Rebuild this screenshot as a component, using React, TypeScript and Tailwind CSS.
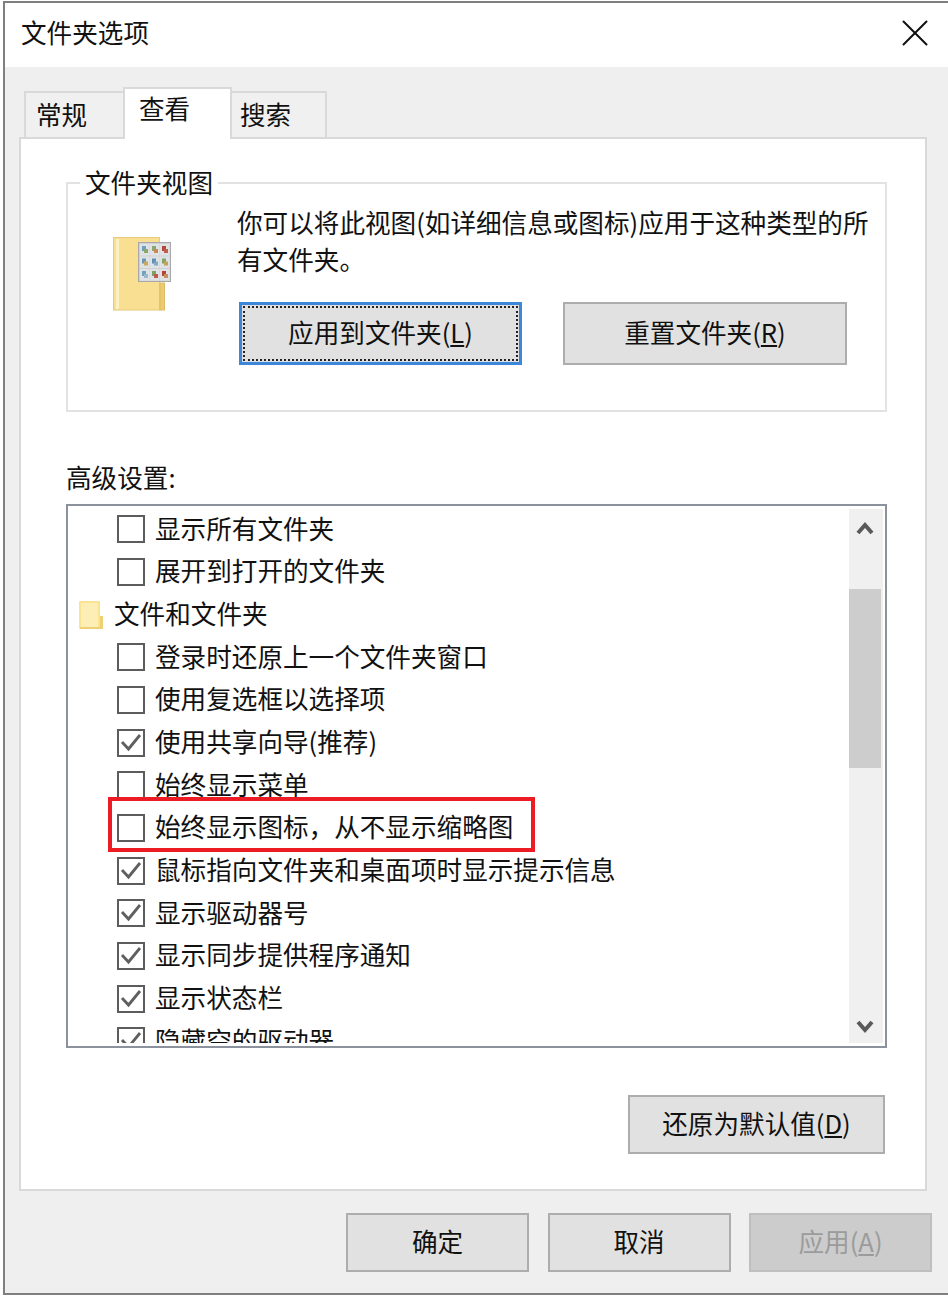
import React from 'react';
import { X } from 'lucide-react';

type Row = { label: string; checked?: boolean; folder?: boolean };

const rows: Row[] = [
  { label: '显示所有文件夹' },
  { label: '展开到打开的文件夹' },
  { label: '文件和文件夹', folder: true },
  { label: '登录时还原上一个文件夹窗口' },
  { label: '使用复选框以选择项' },
  { label: '使用共享向导(推荐)', checked: true },
  { label: '始终显示菜单' },
  { label: '始终显示图标，从不显示缩略图' },
  { label: '鼠标指向文件夹和桌面项时显示提示信息', checked: true },
  { label: '显示驱动器号', checked: true },
  { label: '显示同步提供程序通知', checked: true },
  { label: '显示状态栏', checked: true },
  { label: '隐藏空的驱动器', checked: true },
];

const Checkbox: React.FC<{ checked?: boolean }> = ({ checked }) => (
  <span className="w-[28px] h-[28px] shrink-0 border-2 border-[#5c5c5c] bg-white flex items-center justify-center">
    {checked && (
      <svg width="24" height="24" viewBox="0 0 24 24" fill="none">
        <path d="M3 11 L9.5 18 L21 4" stroke="#5f5f5f" strokeWidth="2.8" />
      </svg>
    )}
  </span>
);

const SmallFolder = () => (
  <svg width="24" height="28" viewBox="0 0 24 28" className="shrink-0">
    <path d="M0 1 Q0 0 1 0 H21 V15 H24 V28 H1 Q0 28 0 27 Z" fill="#fbe394" />
    <path d="M2 2 H19 V26 H2 Z" fill="#fdeeb6" />
    <path d="M21 15 H24 V28 H1 V26 H21 Z" fill="#efcf73" />
  </svg>
);

const FolderViewIcon = () => {
  const cells = [
    ['#6f9fbf', '#8aa86a'],
    ['#8aa86a', '#c98a5a'],
    ['#b8453c', '#c0604c'],
    ['#6a98b8', '#c8a85a'],
    ['#5f90b4', '#7ea8c4'],
    ['#82a468', '#c0a45a'],
    ['#74a0c0', '#98b8cc'],
    ['#7ca268', '#c05a4c'],
    ['#b8423a', '#c8905a'],
  ];
  return (
    <svg width="59" height="74" viewBox="0 0 59 74" className="shrink-0">
      <rect x="0.5" y="0.5" width="46" height="72.5" fill="#f8df92" stroke="#e6cb7d" />
      <rect x="3" y="2" width="3" height="70" fill="#fdf0c4" />
      <rect x="47" y="46" width="4.5" height="27" fill="#eccb6f" stroke="#dcbc66" strokeWidth="1" />
      <rect x="25.5" y="5.5" width="32" height="39" fill="#d0d0d0" stroke="#a9a9a9" />
      {cells.map((colors, i) => {
        const x = 27 + (i % 3) * 10;
        const y = 7 + Math.floor(i / 3) * 12.5;
        return (
          <g key={i}>
            <rect x={x} y={y} width="9.5" height="11.5" fill="#dfe3e6" />
            <rect x={x + 2} y={y + 2} width="4" height="5" fill={colors[0]} />
            <rect x={x + 4} y={y + 5} width="4" height="4" fill={colors[1]} />
          </g>
        );
      })}
    </svg>
  );
};

const Tab: React.FC<{ label: string; active?: boolean; className: string }> = ({ label, active, className }) => (
  <div
    className={
      active
        ? `${className} h-[52px] -mb-[2px] z-10 bg-white border-2 border-b-0 border-[#d9d9d9] pb-[13px] flex items-center`
        : `${className} h-[46px] bg-[#f0f0f0] border-t-2 border-[#d9d9d9] pb-[4px] flex items-center`
    }
  >
    {label}
  </div>
);

const ActionButton: React.FC<{ className: string; disabled?: boolean; children: React.ReactNode }> = ({
  className,
  disabled,
  children,
}) => (
  <button
    className={
      disabled
        ? `${className} border-2 border-[#bfbfbf] bg-[#cccccc] text-[#9b9b9b] flex items-center justify-center`
        : `${className} border-2 border-[#adadad] bg-[#e1e1e1] text-[#111111] flex items-center justify-center`
    }
  >
    <span className="pb-[4px]">{children}</span>
  </button>
);

export default function App() {
  return (
    <div className="w-[948px] h-[1296px] bg-white pt-[1px] pl-[3px] overflow-hidden font-['Noto_Sans_CJK_SC',sans-serif] text-[25.6px] leading-[37px] text-[#111111]">
      <div className="h-[1294px] border-2 border-r-0 border-[#7f7f7f] flex flex-col">
        {/* Title bar */}
        <div className="h-[64px] shrink-0 bg-white flex items-center justify-between pl-[16px] pr-[10px] pb-[4px]">
          <span className="pb-[4px]">文件夹选项</span>
          <X size={46} strokeWidth={1.05} className="text-[#111111]" />
        </div>

        <div className="flex-1 bg-[#efefef] pl-[14px] pr-[21px]">
          {/* Tabs */}
          <div className="flex items-end pt-[20px] pl-[5px]">
            <Tab label="常规" className="w-[99px] pl-[10px] border-l-2" />
            <Tab label="查看" active className="w-[109px] pl-[14px]" />
            <Tab label="搜索" className="w-[95px] pl-[8px] border-r-2" />
          </div>

          {/* Tab panel */}
          <div className="h-[1054px] bg-white border-2 border-[#d9d9d9] pl-[45px] pr-[38px]">
            <fieldset className="h-[249px] mt-[24px] border-2 border-[#e2e2e2]">
              <legend className="ml-[12px] px-[5px] pb-[2px]">文件夹视图</legend>
              <div className="flex pt-[1px] pl-[45px]">
                <div className="w-[124px] pt-[34px]">
                  <FolderViewIcon />
                </div>
                <div>
                  <p className="w-[640px]">
                    你可以将此视图(如详细信息或图标)应用于这种类型的所
                    <br />
                    有文件夹。
                  </p>
                  <div className="flex gap-[41px] mt-[25px] ml-[2px]">
                    <button className="relative w-[283px] h-[63px] border-[3px] border-[#3c87d8] bg-[#e1e1e1] flex items-center justify-center">
                      <span className="absolute inset-[1px] border-2 border-dotted border-[#222222]" />
                      <span className="pb-[4px]">
                        应用到文件夹(<u>L</u>)
                      </span>
                    </button>
                    <ActionButton className="w-[284px] h-[63px]">
                      重置文件夹(<u>R</u>)
                    </ActionButton>
                  </div>
                </div>
              </div>
            </fieldset>

            <div className="mt-[46px] mb-[9px]">高级设置:</div>

            {/* Settings list */}
            <div className="relative h-[544px] border-2 border-[#8b929e] bg-white flex py-[3px] pr-[2px]">
              <div className="flex-1 overflow-hidden">
                <div className="-mt-[1px]">
                  {rows.map((row) => (
                    <div
                      key={row.label}
                      className={
                        row.folder
                          ? 'h-[42.67px] flex items-center pl-[11px] gap-[11px] whitespace-nowrap'
                          : 'h-[42.67px] flex items-center pl-[49px] gap-[10px] whitespace-nowrap'
                      }
                    >
                      {row.folder ? <SmallFolder /> : <Checkbox checked={row.checked} />}
                      <span className="pb-[4px]">{row.label}</span>
                    </div>
                  ))}
                </div>
              </div>

              <div className="w-[34px] shrink-0 bg-[#f0f0f0] flex flex-col">
                <div className="h-[38px] pr-[2px] flex items-center justify-center">
                  <svg width="18" height="14" viewBox="0 0 18 14" fill="none">
                    <path d="M2 12 L9 4 L16 12" stroke="#5a5a5a" strokeWidth="4" />
                  </svg>
                </div>
                <div className="h-[179px] mt-[42px] mr-[2px] bg-[#cdcdcd]" />
                <div className="flex-1" />
                <div className="h-[32px] pr-[2px] flex items-center justify-center">
                  <svg width="18" height="14" viewBox="0 0 18 14" fill="none">
                    <path d="M2 2 L9 10 L16 2" stroke="#5a5a5a" strokeWidth="4" />
                  </svg>
                </div>
              </div>

              {/* Red annotation */}
              <div className="absolute left-[40px] top-[291px] w-[427px] h-[55px] border-4 border-[#ed1c24]" />
            </div>

            <div className="flex justify-end mt-[47px] mr-[2px]">
              <ActionButton className="w-[257px] h-[59px]">
                还原为默认值(<u>D</u>)
              </ActionButton>
            </div>
          </div>

          {/* Footer buttons */}
          <div className="flex justify-end gap-[18.5px] pt-[22px] -mr-[5px]">
            <ActionButton className="w-[183px] h-[59px]">确定</ActionButton>
            <ActionButton className="w-[183px] h-[59px]">取消</ActionButton>
            <ActionButton className="w-[183px] h-[59px]" disabled>
              应用(<u>A</u>)
            </ActionButton>
          </div>
        </div>
      </div>
    </div>
  );
}
